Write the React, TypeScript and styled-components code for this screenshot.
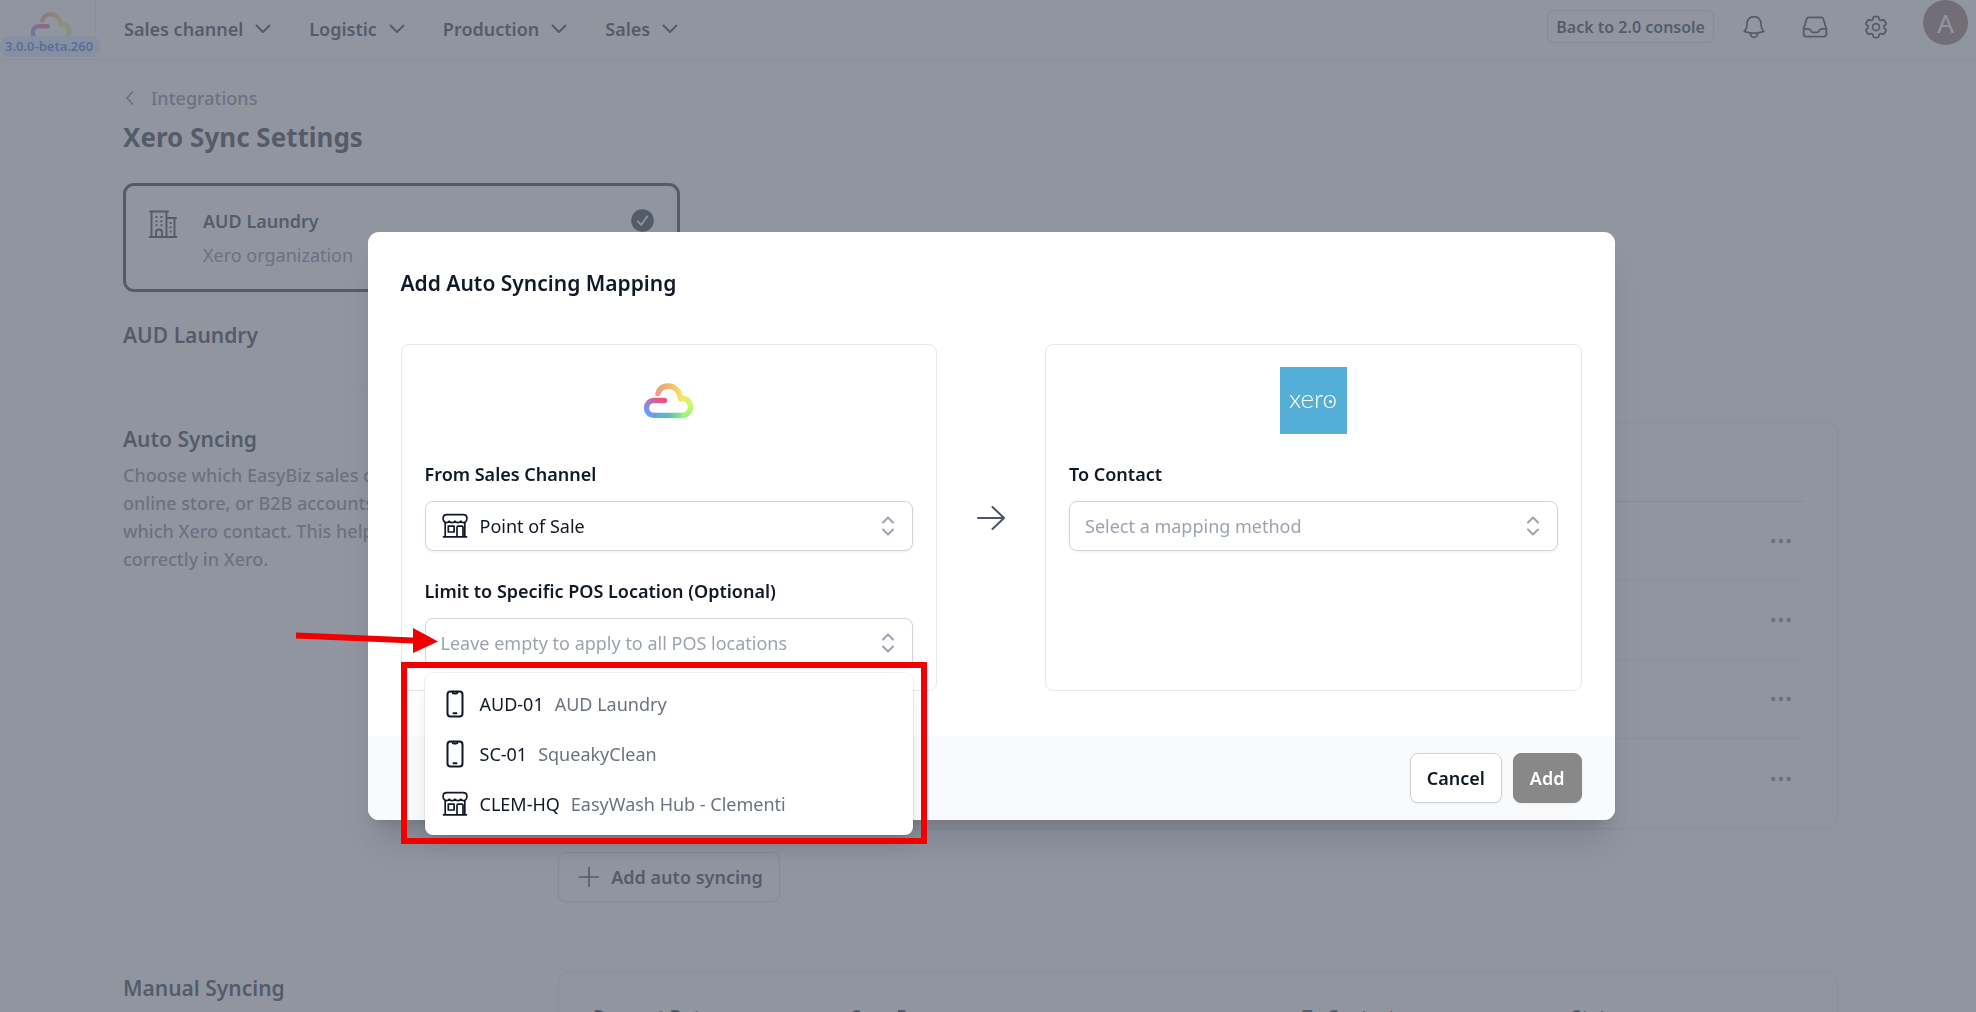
import React from "react";
import styled, { createGlobalStyle } from "styled-components";

const ink = "#111827";
const muted = "#6b7280";
const line = "#d1d5db";
const annotation = "#f00000";

const GlobalStyle = createGlobalStyle`
  * { box-sizing: border-box; }
  body {
    margin: 0;
    color: ${ink};
    background: #fff;
    font-family: "Noto Sans", "Open Sans", sans-serif;
    font-size: 18px;
    line-height: 28px;
  }
  h1, h2, h3, p, ul { margin: 0; padding: 0; }
  button, input, select { font: inherit; color: inherit; }
  svg { display: block; flex: none; }
`;

/* ---------- page behind the dialog ---------- */

const Page = styled.div`
  height: 100vh;
  overflow: hidden;
`;

const Header = styled.header`
  display: flex;
  align-items: flex-start;
  height: 60px;
  border-bottom: 1px solid #e5e7eb;
`;

const LogoCell = styled.a`
  position: relative;
  align-self: stretch;
  width: 96px;
  padding: 10px 0 0 29px;
  border-right: 1px solid #e5e7eb;
  text-decoration: none;
`;

const Version = styled.span`
  position: absolute;
  left: 0;
  bottom: 2px;
  padding: 0 8px 0 5px;
  border-radius: 10px;
  background: #dbeafe;
  color: #2563eb;
  font-size: 13px;
  font-weight: 600;
  line-height: 21px;
  white-space: nowrap;
`;

const Nav = styled.nav`
  display: flex;
  align-items: center;
  flex: 1;
  gap: 37px;
  height: 57px;
  padding-left: 28px;
`;

const NavButton = styled.button`
  display: flex;
  align-items: center;
  gap: 11px;
  padding: 0;
  border: 0;
  background: none;
  font-weight: 600;
`;

const HeaderTools = styled.div`
  display: flex;
  align-items: center;
  gap: 33px;
  height: 53px;
  padding-right: 8px;
`;

const IconButton = styled.button`
  padding: 0;
  border: 0;
  background: none;
`;

const SmallButton = styled.button`
  height: 33px;
  margin-right: -7px;
  padding: 0 8px;
  border: 1px solid ${line};
  border-radius: 6px;
  background: #fff;
  font-size: 16px;
  font-weight: 600;
  line-height: 28px;
`;

const Avatar = styled.button`
  align-self: flex-start;
  width: 45px;
  height: 45px;
  padding: 0;
  border: 0;
  border-radius: 50%;
  background: #87665c;
  color: #fff;
  font-size: 26px;
`;

const Main = styled.main`
  padding: 24px 138px 0 123px;
`;

const Breadcrumb = styled.a`
  display: flex;
  align-items: center;
  gap: 16px;
  color: ${muted};
  font-weight: 500;
  text-decoration: none;
`;

const PageTitle = styled.h1`
  margin-top: 7px;
  font-size: 26px;
  font-weight: 700;
  line-height: 36px;
`;

const OrgCard = styled.button`
  display: flex;
  align-items: flex-start;
  gap: 25px;
  width: 557px;
  max-width: 100%;
  margin-top: 28px;
  padding: 18px 23px 17px 22px;
  border: 3px solid ${ink};
  border-radius: 11px;
  background: #fff;
  text-align: left;
  line-height: 34px;
`;

const OrgText = styled.span`
  display: grid;
  flex: 1;
`;

const OrgName = styled.span`
  font-weight: 600;
`;

const OrgKind = styled.span`
  color: ${muted};
`;

const OrgIcon = styled.span`
  padding-top: 5px;
`;

const SectionTitle = styled.h2`
  font-size: 21px;
  font-weight: 600;
  line-height: 34px;
`;

const OrgHeading = styled(SectionTitle)`
  margin: 26px 0 35px;
`;

const Section = styled.section`
  display: grid;
  grid-template-columns: repeat(4, 1fr);
  column-gap: 26px;
  padding: 34px 0;
  border-top: 1px solid #f3f4f6;
`;

const Intro = styled.p`
  margin-top: 5px;
  color: ${muted};
  font-weight: 500;
`;

const Panel = styled.div`
  grid-column: span 3;
`;

const TableCard = styled.div`
  padding: 10px 34px;
  border: 1px solid #e5e7eb;
  border-radius: 11px;
`;

const Table = styled.table`
  width: 100%;
  border-collapse: separate;
  border-spacing: 0;
  table-layout: fixed;
`;

const HeadCell = styled.th<{ $width?: string }>`
  width: ${(p) => p.$width ?? "auto"};
  height: 69px;
  padding: 0;
  border-bottom: 1px solid ${line};
  font-weight: 600;
  text-align: left;
`;

const Cell = styled.td<{ $last: boolean }>`
  height: 79px;
  padding: 0;
  border-bottom: ${(p) => (p.$last ? "0" : "1px solid #e5e7eb")};
`;

const MoreButton = styled(IconButton)`
  display: block;
  margin: 0 8px 0 auto;
  color: ${muted};
`;

const OutlineButton = styled.button`
  display: inline-flex;
  align-items: center;
  height: 50px;
  padding: 0 16px;
  border: 1px solid ${line};
  border-radius: 8px;
  background: #fff;
  box-shadow: 0 1px 3px rgba(0, 0, 0, 0.06);
  font-weight: 600;
`;

const AddSyncing = styled(OutlineButton)`
  gap: 8px;
  margin-top: 23px;
`;

/* ---------- dialog ---------- */

const Overlay = styled.div`
  position: fixed;
  inset: 0;
  display: flex;
  align-items: center;
  justify-content: center;
  padding: 40px 0 0 6px;
  background: rgba(107, 114, 128, 0.75);
`;

const Dialog = styled.form`
  width: 100%;
  max-width: 1247px;
  border-radius: 11px;
  background: #fff;
  box-shadow: 0 28px 35px -7px rgba(0, 0, 0, 0.12), 0 11px 14px -8px rgba(0, 0, 0, 0.12);
`;

const DialogBody = styled.div`
  padding: 34px 33px 45px;
`;

const MappingGrid = styled.div`
  display: grid;
  grid-template-columns: 1fr 108px 1fr;
  margin-top: 44px;
`;

const MappingCard = styled.div`
  display: flex;
  flex-direction: column;
  gap: 26px;
  padding: 22px 23px;
  border: 1px solid #e5e7eb;
  border-radius: 8px;
`;

const Brand = styled.div`
  display: flex;
  align-items: center;
  justify-content: center;
  height: 67px;
`;

const Between = styled.div`
  display: flex;
  align-items: center;
  justify-content: center;
  color: #4b5563;
`;

const Field = styled.div`
  display: flex;
  flex-direction: column;
  gap: 13px;
`;

const Label = styled.label`
  font-weight: 600;
`;

const Control = styled.div`
  position: relative;
  display: flex;
  align-items: center;
  gap: 11px;
  height: 50px;
  padding: 0 10px 0 15px;
  border: 1px solid ${line};
  border-radius: 8px;
  background: #fff;
  box-shadow: 0 1px 3px rgba(0, 0, 0, 0.06);
`;

const Select = styled.select<{ $empty?: boolean }>`
  flex: 1;
  min-width: 0;
  height: 100%;
  padding: 0;
  border: 0;
  outline: 0;
  appearance: none;
  background: none;
  color: ${(p) => (p.$empty ? "#9ca3af" : ink)};
`;

const TextInput = styled.input`
  flex: 1;
  min-width: 0;
  height: 100%;
  padding: 0;
  border: 0;
  outline: 0;
  background: none;
  &::placeholder { color: #9ca3af; opacity: 1; }
`;

const Options = styled.ul`
  position: absolute;
  top: 54px;
  left: -1px;
  right: -1px;
  padding: 6px 0;
  border-radius: 8px;
  background: #fff;
  box-shadow: 0 0 0 1px rgba(0, 0, 0, 0.05), 0 14px 21px -4px rgba(0, 0, 0, 0.1), 0 6px 8px -5px rgba(0, 0, 0, 0.1);
  list-style: none;
`;

const Option = styled.li`
  display: flex;
  align-items: center;
  gap: 11px;
  height: 50px;
  padding: 0 16px;
`;

const OptionDetail = styled.span`
  color: ${muted};
`;

const Highlight = styled.div`
  position: absolute;
  top: 43px;
  left: -25px;
  right: -15px;
  height: 182px;
  border: 6px solid ${annotation};
  pointer-events: none;
`;

const Pointer = styled.svg`
  position: absolute;
  top: 8px;
  left: -130px;
  pointer-events: none;
`;

const DialogFooter = styled.div`
  display: flex;
  justify-content: flex-end;
  gap: 11px;
  padding: 17px 33px;
  border-radius: 0 0 11px 11px;
  background: #f9fafb;
`;

const SubmitButton = styled(OutlineButton)`
  border-color: #888;
  background: #888;
  color: #fff;
`;

/* ---------- icons ---------- */

const stroke = { fill: "none", stroke: "currentColor", strokeLinecap: "round", strokeLinejoin: "round" } as const;

const ChevronDown = () => (
  <svg width="18" height="18" viewBox="0 0 18 18" {...stroke} strokeWidth="2"><path d="M2.500 5.500 9 12l6.500-6.500" /></svg>
);
const ChevronLeft = () => (
  <svg width="12" height="16" viewBox="0 0 12 16" {...stroke} strokeWidth="1.800"><path d="M9.500 2 4 8l5.500 6" /></svg>
);
const UpDown = () => (
  <svg width="28" height="28" viewBox="0 0 28 28" {...stroke} stroke="#9ca3af" strokeWidth="2"><path d="M9 10.500 14 5.500l5 5M9 17.500l5 5 5-5" /></svg>
);
const ArrowRight = () => (
  <svg width="28" height="28" viewBox="0 0 28 28" {...stroke} strokeWidth="2"><path d="M1 14h26M15.500 3 27 14 15.500 25" /></svg>
);
const Plus = () => (
  <svg width="28" height="28" viewBox="0 0 28 28" {...stroke} strokeWidth="1.600"><path d="M14 4.500v19M4.500 14h19" /></svg>
);
const Dots = () => (
  <svg width="28" height="28" viewBox="0 0 28 28" fill="currentColor"><circle cx="6.300" cy="14" r="2.200" /><circle cx="14" cy="14" r="2.200" /><circle cx="21.700" cy="14" r="2.200" /></svg>
);
const Bell = () => (
  <svg width="28" height="28" viewBox="0 0 24 24" {...stroke} strokeWidth="1.500"><path d="M14.857 17.082a23.848 23.848 0 0 0 5.454-1.310A8.967 8.967 0 0 1 18 9.750V9A6 6 0 0 0 6 9v.75a8.967 8.967 0 0 1-2.312 6.022c1.733.64 3.560 1.085 5.455 1.310m5.714 0a24.255 24.255 0 0 1-5.714 0m5.714 0a3 3 0 1 1-5.714 0" /></svg>
);
const Inbox = () => (
  <svg width="28" height="28" viewBox="0 0 24 24" {...stroke} strokeWidth="1.500"><path d="M2.250 13.500h3.860a2.250 2.250 0 0 1 2.012 1.244l.256.512a2.250 2.250 0 0 0 2.013 1.244h3.218a2.250 2.250 0 0 0 2.013-1.244l.256-.512a2.250 2.250 0 0 1 2.013-1.244h3.859m-19.500.338V18a2.250 2.250 0 0 0 2.250 2.250h15A2.250 2.250 0 0 0 21.750 18v-4.162c0-.224-.034-.447-.1-.661L19.240 5.338a2.250 2.250 0 0 0-2.150-1.588H6.911a2.250 2.250 0 0 0-2.150 1.588L2.350 13.177a2.250 2.250 0 0 0-.1.661Z" /></svg>
);
const Cog = () => (
  <svg width="28" height="28" viewBox="0 0 24 24" {...stroke} strokeWidth="1.500"><path d="M9.594 3.940c.09-.542.56-.94 1.110-.94h2.593c.55 0 1.020.398 1.110.94l.213 1.281c.063.374.313.686.645.870.074.040.147.083.22.127.325.196.72.257 1.075.124l1.217-.456a1.125 1.125 0 0 1 1.370.490l1.296 2.247a1.125 1.125 0 0 1-.26 1.431l-1.003.827c-.293.241-.438.613-.43.992a7.723 7.723 0 0 1 0 .255c-.008.378.137.750.43.991l1.004.827c.424.350.534.955.26 1.430l-1.298 2.247a1.125 1.125 0 0 1-1.369.491l-1.217-.456c-.355-.133-.75-.072-1.076.124a6.470 6.470 0 0 1-.22.128c-.331.183-.581.495-.644.869l-.213 1.281c-.09.543-.56.940-1.110.940h-2.594c-.55 0-1.019-.398-1.110-.94l-.213-1.281c-.062-.374-.312-.686-.644-.870a6.520 6.520 0 0 1-.22-.127c-.325-.196-.72-.257-1.076-.124l-1.217.456a1.125 1.125 0 0 1-1.369-.490l-1.297-2.247a1.125 1.125 0 0 1 .26-1.431l1.004-.827c.292-.24.437-.613.43-.991a6.932 6.932 0 0 1 0-.255c.007-.38-.138-.751-.43-.992l-1.004-.827a1.125 1.125 0 0 1-.26-1.430l1.297-2.247a1.125 1.125 0 0 1 1.370-.491l1.216.456c.356.133.751.072 1.076-.124.072-.044.146-.086.22-.128.332-.183.582-.495.644-.869l.214-1.280Z" /><circle cx="12" cy="12" r="3" /></svg>
);
const Store = () => (
  <svg width="28" height="28" viewBox="0 0 28 28" {...stroke} strokeWidth="1.700">
    <path d="M6 2.700h16c2.500 0 3.900 1.600 3.900 3.600 0 2.300-1.300 4.300-3.100 4.300-1.600 0-2.600-.6-3-1.500-.6.900-1.600 1.500-2.900 1.500s-2.300-.6-2.900-1.500c-.6.900-1.600 1.500-2.900 1.500s-2.300-.6-2.900-1.500c-.5.900-1.400 1.500-3 1.500-1.800 0-3.100-2-3.100-4.300 0-2 1.400-3.600 3.900-3.600Z" />
    <path d="M4.200 10.600v13.700M23.800 10.600v13.700M2.500 24.800h23M16 24.500v-9.300c0-.6.400-1 1-1h4c.6 0 1 .4 1 1v9.300M7.300 14.200h5.800v5.800H7.300z" />
  </svg>
);
const Phone = () => (
  <svg width="28" height="28" viewBox="0 0 28 28" {...stroke} strokeWidth="2">
    <rect x="6.500" y="1.500" width="15" height="25" rx="3" />
    <path d="M11.500 2.200c.2 1 .8 1.300 1.500 1.300h2c.7 0 1.300-.3 1.500-1.300M12.500 23.300h3" />
  </svg>
);
const Building = () => (
  <svg width="30" height="30" viewBox="0 0 30 30" {...stroke} strokeWidth="1.900">
    <path d="M2 2.500h18M1.500 28h27M3.500 2.500V28M18.500 2.500V28M18.500 9H28M26.500 9v19M8 28v-5c0-1.500 1.200-2.500 3-2.500s3 1 3 2.500v5" />
    <path d="M8.200 8h.5M13.200 8h.5M8.200 12.200h.5M13.200 12.200h.5M8.200 16.300h.5M13.200 16.300h.5M22.300 14h.5M22.300 18.300h.5M22.300 22.600h.5" />
  </svg>
);
const CheckCircle = () => (
  <svg width="23" height="23" viewBox="0 0 23 23"><circle cx="11.500" cy="11.500" r="11.300" fill={ink} /><path d="m6.800 12.300 3.400 3.500 6-8.300" fill="none" stroke="#fff" strokeWidth="1.800" strokeLinecap="round" strokeLinejoin="round" /></svg>
);

const Cloud = ({ id, width }: { id: string; width: number }) => (
  <svg width={width} viewBox="0 0 53 40" fill="none" strokeWidth="5.400" strokeLinejoin="round" aria-label="EasyBiz">
    <defs>
      <linearGradient id={`${id}-top`} gradientUnits="userSpaceOnUse" x1="15" y1="10" x2="39" y2="16">
        <stop stopColor="#f29a80" /><stop offset=".5" stopColor="#f7bd6c" /><stop offset="1" stopColor="#f5e663" />
      </linearGradient>
      <linearGradient id={`${id}-right`} gradientUnits="userSpaceOnUse" x1="40" y1="16" x2="44" y2="36">
        <stop stopColor="#f3ea64" /><stop offset=".5" stopColor="#c6fa6c" /><stop offset="1" stopColor="#93f27a" />
      </linearGradient>
      <linearGradient id={`${id}-base`} gradientUnits="userSpaceOnUse" x1="11" y1="34" x2="41" y2="34">
        <stop stopColor="#5fa3f3" /><stop offset=".5" stopColor="#5bbcc0" /><stop offset="1" stopColor="#90f07b" />
      </linearGradient>
      <linearGradient id={`${id}-left`} gradientUnits="userSpaceOnUse" x1="20" y1="20" x2="9" y2="35">
        <stop stopColor="#f0527f" /><stop offset=".5" stopColor="#a878c8" /><stop offset="1" stopColor="#5fa3f3" />
      </linearGradient>
    </defs>
    <path d="M16 12.500C17.500 8 21 5 26 5c6.800 0 11.700 5 12.500 13" stroke={`url(#${id}-top)`} strokeLinecap="round" />
    <path d="M38.500 17.300C44 16.500 48.500 20.500 48.500 25.800c0 5-4 8.700-9 8.700" stroke={`url(#${id}-right)`} />
    <path d="M40 34.500 11.500 34.400" stroke={`url(#${id}-base)`} />
    <path d="M12 34.400c-4.400 0-7.500-3.200-7.500-7.400s3.100-7.500 7.500-7.500h10.500" stroke={`url(#${id}-left)`} strokeLinecap="round" />
  </svg>
);

const XeroLogo = () => (
  <svg width="67" height="67" viewBox="0 0 67 67" aria-label="xero">
    <path fill="#55aed6" d="M0 0h67v67H0z" />
    <text x="33" y="41" textAnchor="middle" fill="#fff" fontFamily="Lato, sans-serif" fontSize="26" fontWeight="300">xero</text>
    <circle cx="50.500" cy="34.500" r="1.600" fill="#fff" />
  </svg>
);

/* ---------- data ---------- */

const navItems = ["Sales channel", "Logistic", "Production", "Sales"];
const mappings = ["Point of Sale", "Online store", "B2B account", "Marketplace"];
const locations = [
  { code: "AUD-01", name: "AUD Laundry", icon: <Phone /> },
  { code: "SC-01", name: "SqueakyClean", icon: <Phone /> },
  { code: "CLEM-HQ", name: "EasyWash Hub - Clementi", icon: <Store /> },
];

export default function App() {
  return (
    <>
      <GlobalStyle />
      <Page>
        <Header>
          <LogoCell href="#">
            <Cloud id="nav" width={44} />
            <Version>3.0.0-beta.260</Version>
          </LogoCell>
          <Nav>
            {navItems.map((item) => (
              <NavButton key={item} type="button">{item}<ChevronDown /></NavButton>
            ))}
          </Nav>
          <HeaderTools>
            <SmallButton type="button">Back to 2.0 console</SmallButton>
            <IconButton type="button" aria-label="Notifications"><Bell /></IconButton>
            <IconButton type="button" aria-label="Inbox"><Inbox /></IconButton>
            <IconButton type="button" aria-label="Settings"><Cog /></IconButton>
            <Avatar type="button" aria-label="Account">A</Avatar>
          </HeaderTools>
        </Header>

        <Main>
          <Breadcrumb href="#"><ChevronLeft />Integrations</Breadcrumb>
          <PageTitle>Xero Sync Settings</PageTitle>
          <OrgCard type="button">
            <OrgIcon><Building /></OrgIcon>
            <OrgText>
              <OrgName>AUD Laundry</OrgName>
              <OrgKind>Xero organization</OrgKind>
            </OrgText>
            <OrgIcon><CheckCircle /></OrgIcon>
          </OrgCard>
          <OrgHeading>AUD Laundry</OrgHeading>

          <Section>
            <div>
              <SectionTitle>Auto Syncing</SectionTitle>
              <Intro>
                Choose which EasyBiz sales channel (POS, online store, or B2B accounts) should sync to which Xero contact. This helps record sales correctly in Xero.
              </Intro>
            </div>
            <Panel>
              <TableCard>
                <Table>
                  <thead>
                    <tr><HeadCell>From</HeadCell><HeadCell>To Contact</HeadCell><HeadCell $width="80px" aria-label="Actions" /></tr>
                  </thead>
                  <tbody>
                    {mappings.map((name, i) => {
                      const last = i === mappings.length - 1;
                      return (
                        <tr key={name}>
                          <Cell $last={last}>{name}</Cell>
                          <Cell $last={last}>{name}</Cell>
                          <Cell $last={last}><MoreButton type="button" aria-label="More"><Dots /></MoreButton></Cell>
                        </tr>
                      );
                    })}
                  </tbody>
                </Table>
              </TableCard>
              <AddSyncing type="button"><Plus />Add auto syncing</AddSyncing>
            </Panel>
          </Section>

          <Section>
            <SectionTitle>Manual Syncing</SectionTitle>
            <Panel>
              <TableCard>
                <Table>
                  <thead>
                    <tr>
                      <HeadCell $width="258px">Request Date</HeadCell>
                      <HeadCell $width="451px">Sync From</HeadCell>
                      <HeadCell $width="269px">To Contact</HeadCell>
                      <HeadCell>Status</HeadCell>
                    </tr>
                  </thead>
                </Table>
              </TableCard>
            </Panel>
          </Section>
        </Main>
      </Page>

      <Overlay>
        <Dialog role="dialog" aria-labelledby="dialog-title">
          <DialogBody>
            <SectionTitle id="dialog-title">Add Auto Syncing Mapping</SectionTitle>
            <MappingGrid>
              <MappingCard>
                <Brand><Cloud id="card" width={53} /></Brand>
                <Field>
                  <Label htmlFor="channel">From Sales Channel</Label>
                  <Control>
                    <Store />
                    <Select id="channel" defaultValue="pos"><option value="pos">Point of Sale</option></Select>
                    <UpDown />
                  </Control>
                </Field>
                <Field>
                  <Label htmlFor="location">Limit to Specific POS Location (Optional)</Label>
                  <Control>
                    <TextInput id="location" role="combobox" aria-expanded="true" aria-controls="locations" placeholder="Leave empty to apply to all POS locations" />
                    <UpDown />
                    <Options id="locations" role="listbox">
                      {locations.map(({ code, name, icon }) => (
                        <Option key={code} role="option">{icon}<span>{code}</span><OptionDetail>{name}</OptionDetail></Option>
                      ))}
                    </Options>
                    <Highlight />
                    <Pointer width="144" height="28" viewBox="0 0 144 28" fill={annotation}>
                      <path d="m0 5.500 117 5V1l25 13.500-25 11.500v-9.500L0 11.500z" />
                    </Pointer>
                  </Control>
                </Field>
              </MappingCard>
              <Between><ArrowRight /></Between>
              <MappingCard>
                <Brand><XeroLogo /></Brand>
                <Field>
                  <Label htmlFor="contact">To Contact</Label>
                  <Control>
                    <Select id="contact" $empty defaultValue=""><option value="">Select a mapping method</option></Select>
                    <UpDown />
                  </Control>
                </Field>
              </MappingCard>
            </MappingGrid>
          </DialogBody>
          <DialogFooter>
            <OutlineButton type="button">Cancel</OutlineButton>
            <SubmitButton type="submit">Add</SubmitButton>
          </DialogFooter>
        </Dialog>
      </Overlay>
    </>
  );
}
